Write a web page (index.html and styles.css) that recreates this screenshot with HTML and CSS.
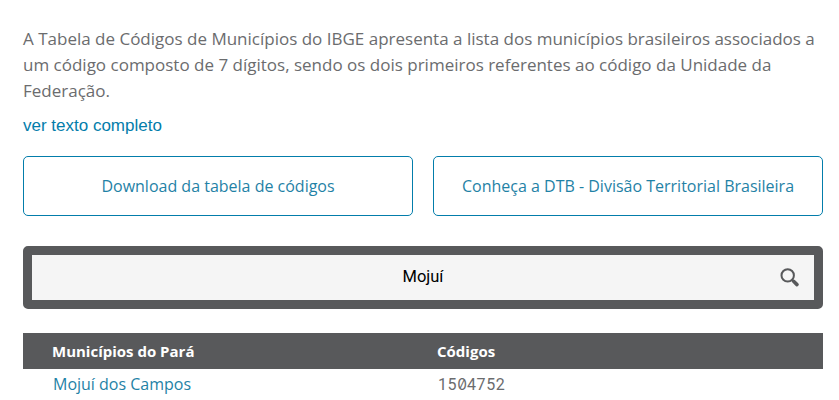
FILE: index.html
```html
<!DOCTYPE html>
<html lang="pt-BR">
<head>
<meta charset="utf-8">
<title>Códigos dos Municípios</title>
<link rel="stylesheet" href="styles.css">
</head>
<body>
<main class="page">
<p class="intro">A Tabela de Códigos de Municípios do IBGE apresenta a lista dos municípios brasileiros associados a<br>um código composto de 7 dígitos, sendo os dois primeiros referentes ao código da Unidade da<br>Federação.</p>
<a class="more">ver texto completo</a>
<div class="actions">
<a class="button">Download da tabela de códigos</a>
<a class="button">Conheça a DTB - Divisão Territorial Brasileira</a>
</div>
<div class="search">
<span class="query">Mojuí</span>
<svg class="icon" viewBox="0 0 20 20" width="20" height="20"><circle cx="7.7" cy="7.4" r="6.2" fill="none" stroke="#58595b" stroke-width="2"/><path d="M12 11.7l1.8 1.8" stroke="#58595b" stroke-width="2"/><path d="M13.6 13.3l3.4 3.3" stroke="#58595b" stroke-width="3.6" stroke-linecap="round"/></svg>
</div>
<table class="results">
<thead><tr><th>Municípios do Pará</th><th>Códigos</th></tr></thead>
<tbody><tr><td class="city">Mojuí dos Campos</td><td class="code">15<span class="zero">0</span>4752</td></tr></tbody>
</table>
</main>
</body>
</html>
```
FILE: styles.css
```css
* { box-sizing: border-box; }
body { margin: 0; background: #fff; font-family: "Open Sans", sans-serif; font-size: 16px; color: #6b6c6e; overflow: hidden; }
.page { padding: 26px 16px 0 23px; }
.intro { margin: 0; font-size: 17px; line-height: 26px; white-space: nowrap; }
.more { display: block; margin-top: 10px; line-height: 24px; font-family: "Liberation Sans", sans-serif; font-size: 17px; color: #037dab; }
.actions { display: grid; grid-template-columns: 1fr 1fr; gap: 20px; margin-top: 18px; }
.button { height: 60px; line-height: 58px; border: 1px solid #037dab; border-radius: 5px; text-align: center; color: #1f82a6; white-space: nowrap; }
.search { display: flex; align-items: center; height: 63px; margin-top: 30px; border: 9px solid #58595b; border-radius: 5px; background: #f5f5f5; padding-right: 14px; }
.query { flex: 1; padding: 0 0 2px 34px; text-align: center; font-family: Roboto, sans-serif; font-size: 16.5px; color: #000; }
.icon { flex: none; }
.results { width: 100%; margin-top: 24px; border-collapse: collapse; table-layout: fixed; }
th { height: 36px; padding: 0 0 0 29px; background: #58595b; color: #fff; text-align: left; font-size: 15px; }
th:first-child { width: 385px; }
td { height: 31px; padding: 0 0 2px 30px; }
.city { color: #1f82a6; }
.code { padding-bottom: 0; font-family: Roboto, sans-serif; letter-spacing: 0.6px; }
.zero { font-family: Inter, sans-serif; font-size: 15.5px; line-height: 1; font-feature-settings: "zero"; letter-spacing: 0; }
```
